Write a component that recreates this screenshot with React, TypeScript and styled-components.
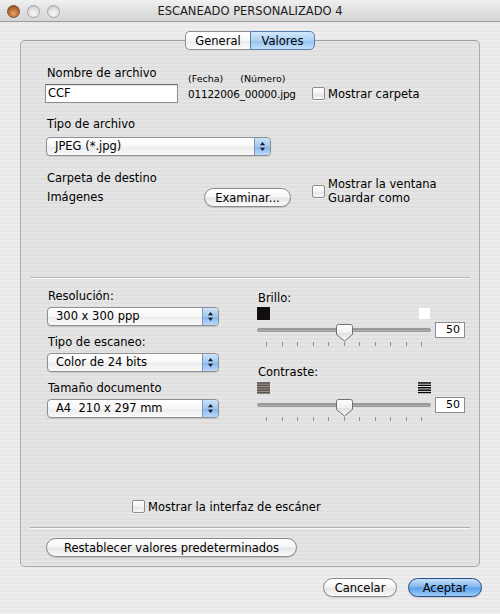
import React from 'react';
import styled, { createGlobalStyle, css } from 'styled-components';

const Global = createGlobalStyle`
  html, body { margin: 0; padding: 0; }
  body {
    font-family: "DejaVu Sans", "Noto Sans", sans-serif;
    font-size: 11.5px;
    color: #000;
  }
  * { box-sizing: border-box; }
`;

const Window = styled.div`
  width: 500px;
  height: 614px;
  display: flex;
  flex-direction: column;
  overflow: hidden;
  background: repeating-linear-gradient(
    to bottom,
    #eeeeee 0px, #eeeeee 2px,
    #e8e8e8 2px, #e8e8e8 4px
  );
`;

const TitleBar = styled.div`
  height: 22px;
  flex: none;
  display: grid;
  grid-template-columns: 1fr auto 1fr;
  align-items: center;
  background: linear-gradient(#f0f0f0, #dedede 60%, #d6d6d6);
  border-bottom: 1px solid #9c9c9c;
`;

const Lights = styled.div`
  display: flex;
  gap: 7px;
  padding-left: 7px;
  padding-top: 1px;
`;

const Light = styled.span<{ $close?: boolean }>`
  width: 13px;
  height: 13px;
  border-radius: 50%;
  ${(p) =>
    p.$close
      ? css`
          background: radial-gradient(circle at 50% 70%, #e7a064 0%, #b86a34 55%, #7d4018 100%);
          border: 1px solid #7a4a28;
        `
      : css`
          background: radial-gradient(circle at 50% 70%, #f8f8f8 0%, #e0e0e0 55%, #bdbdbd 100%);
          border: 1px solid #a6a6a6;
        `}
`;

const Title = styled.div`
  font-size: 11.5px;
  color: #1c1c1c;
  padding-top: 1px;
`;

const Body = styled.div`
  display: flex;
  flex-direction: column;
  padding: 9px 20px 0 20px;
`;

const TabStrip = styled.div`
  display: flex;
  justify-content: center;
  height: 19px;
  margin-bottom: -10px;
  position: relative;
  z-index: 1;
`;

const Tab = styled.div<{ $active?: boolean; $first?: boolean; $last?: boolean }>`
  width: 65px;
  height: 19px;
  display: flex;
  align-items: center;
  justify-content: center;
  font-size: 11.5px;
  border: 1px solid #8d8d8d;
  background: linear-gradient(#ffffff, #f7f7f7 50%, #ececec 51%, #fbfbfb);
  ${(p) => p.$first && css`border-radius: 5px 0 0 5px; border-right: none;`}
  ${(p) => p.$last && css`border-radius: 0 5px 5px 0;`}
  ${(p) =>
    p.$active &&
    css`
      border-color: #5a7fae;
      background: linear-gradient(#d4e8fb, #aad0f4 50%, #92c1ef 51%, #c4e0fa);
    `}
`;

const TabBox = styled.div`
  border: 1px solid #a9a9a9;
  border-top-color: #9e9e9e;
  border-radius: 5px;
  background: rgba(0, 0, 0, 0.035);
  padding: 24px 0 9px 0;
  display: flex;
  flex-direction: column;
`;

const Section = styled.div<{ $top?: number; $left?: number }>`
  padding-left: ${(p) => p.$left ?? 24}px;
  margin-top: ${(p) => p.$top ?? 0}px;
`;

const NameGrid = styled.div`
  display: grid;
  grid-template-columns: 143px 124px 1fr;
  grid-template-rows: 19px 19px;
  align-items: center;
`;

const Label = styled.div`
  line-height: 16px;
  height: 16px;
  padding-left: 2px;
  white-space: pre;
`;

const TopLabel = styled(Label)`
  align-self: start;
`;

const SmallRow = styled.div`
  display: flex;
  gap: 17px;
  font-size: 9.5px;
  align-self: end;
  padding-top: 3px;
`;

const TextInput = styled.div`
  width: 133px;
  height: 19px;
  background: #fff;
  border: 1px solid #8e8e8e;
  border-top-color: #6e6e6e;
  box-shadow: inset 0 1px 1px rgba(0, 0, 0, 0.12);
  padding-left: 2px;
  line-height: 17px;
`;

const FileName = styled.div`
  white-space: nowrap;
  font-size: 10.4px;
  letter-spacing: -0.15px;
`;

const CheckRow = styled.div<{ $align?: string }>`
  display: flex;
  align-items: ${(p) => p.$align ?? 'center'};
  gap: 3px;
  white-space: nowrap;
`;

const Check = styled.span`
  width: 13px;
  height: 13px;
  flex: none;
  border: 1px solid #8b8b8b;
  border-radius: 2px;
  background: linear-gradient(#ffffff, #f2f2f2 50%, #e4e4e4 51%, #f6f6f6);
  box-shadow: 0 1px 0 rgba(255, 255, 255, 0.6);
`;

const Field = styled.div<{ $gap?: number }>`
  display: flex;
  flex-direction: column;
  gap: ${(p) => p.$gap ?? 3}px;
`;

const PopupBox = styled.div<{ $width: number }>`
  width: ${(p) => p.$width}px;
  height: 19px;
  margin-left: 1px;
  display: flex;
  border: 1px solid #8f8f8f;
  border-radius: 4px;
  background: linear-gradient(#ffffff, #f6f6f6 50%, #ebebeb 51%, #fafafa);
  overflow: hidden;
  box-shadow: 0 1px 1px rgba(0, 0, 0, 0.12);
`;

const PopupText = styled.div`
  flex: 1;
  padding-left: 8px;
  line-height: 17px;
  white-space: pre;
`;

const PopupArrows = styled.div`
  width: 16px;
  flex: none;
  display: flex;
  align-items: center;
  justify-content: center;
  border-left: 1px solid #7d97ba;
  border-radius: 0 3px 3px 0;
  background: linear-gradient(#cde3f9, #9fc7f0 50%, #82b6ec 51%, #b9d9f8);
`;

const Popup = ({ text, width }: { text: string; width: number }) => (
  <PopupBox $width={width}>
    <PopupText>{text}</PopupText>
    <PopupArrows>
      <svg width="7" height="11" viewBox="0 0 7 11">
        <path d="M3.5 1 L6 4.2 H1 Z" fill="#1a1a1a" />
        <path d="M3.5 10 L6 6.8 H1 Z" fill="#1a1a1a" />
      </svg>
    </PopupArrows>
  </PopupBox>
);

const FolderRow = styled.div`
  display: flex;
  align-items: flex-start;
`;

const FolderCol = styled.div`
  width: 159px;
  flex: none;
  line-height: 19px;
  padding-left: 2px;
`;

const AquaButton = styled.div<{ $width: number; $default?: boolean }>`
  width: ${(p) => p.$width}px;
  height: 19px;
  flex: none;
  display: flex;
  align-items: center;
  justify-content: center;
  border-radius: 10px;
  border: 1px solid #8a8a8a;
  background: linear-gradient(#ffffff, #f6f6f6 45%, #e6e6e6 55%, #fbfbfb);
  box-shadow: 0 1px 1px rgba(0, 0, 0, 0.15);
  white-space: nowrap;
  ${(p) =>
    p.$default &&
    css`
      border-color: #264f88;
      background: linear-gradient(#c6e0fb, #7fb6ee 48%, #5a9fe8 52%, #9ccdf9);
    `}
`;

const BrowseButton = styled(AquaButton)`
  margin-top: 19px;
`;

const SaveCheck = styled(CheckRow)`
  margin-left: 21px;
  margin-top: 8px;
  line-height: 14px;
  gap: 3px;
  align-items: center;
`;

const Separator = styled.div<{ $top: number }>`
  height: 2px;
  margin: ${(p) => p.$top}px 9px 0 9px;
  border-top: 1px solid #b2b2b2;
  border-bottom: 1px solid #fafafa;
`;

const ScanGrid = styled.div`
  display: grid;
  grid-template-columns: 172px 208px;
  column-gap: 39px;
  margin-top: 9px;
  padding-left: 25px;
`;

const Column = styled.div<{ $gap?: number }>`
  display: flex;
  flex-direction: column;
  gap: ${(p) => p.$gap ?? 0}px;
`;

const SliderLabel = styled(Label)<{ $top: number }>`
  margin-top: ${(p) => p.$top}px;
  padding-left: 1px;
`;

const IconRow = styled.div`
  display: flex;
  justify-content: space-between;
  width: 174px;
  height: 13px;
  margin-top: 1px;
`;

const Swatch = styled.span<{ $color: string }>`
  width: 13px;
  height: 13px;
  background: ${(p) => p.$color};
  border: 1px solid ${(p) => (p.$color === '#ffffff' ? '#e2e2e2' : '#111')};
`;

const SliderRow = styled.div`
  display: flex;
  align-items: center;
  height: 18px;
  gap: 4px;
  margin-top: 1px;
`;

const TrackWrap = styled.div`
  position: relative;
  width: 174px;
  height: 18px;
  display: flex;
  align-items: center;
`;

const Track = styled.div`
  width: 100%;
  height: 4px;
  border-radius: 2px;
  background: linear-gradient(#8e8e8e, #b9b9b9);
  border: 1px solid #9a9a9a;
`;

const Thumb = styled.svg`
  position: absolute;
  left: 79px;
  top: 3px;
`;

const ValueBox = styled.div`
  width: 30px;
  height: 16px;
  background: #fff;
  border: 1px solid #8c8c8c;
  text-align: right;
  padding-right: 4px;
  font-size: 11px;
  line-height: 14px;
`;

const Ticks = styled.div`
  display: flex;
  justify-content: space-between;
  width: 174px;
  padding: 0 9px;
  margin-top: 3px;
`;

const Tick = styled.span`
  width: 1px;
  height: 4px;
  background: #8f8f8f;
`;

const Slider = () => (
  <>
    <SliderRow>
      <TrackWrap>
        <Track />
        <Thumb width="17" height="18" viewBox="0 0 17 18">
          <defs>
            <linearGradient id="tg" x1="0" y1="0" x2="0" y2="1">
              <stop offset="0" stopColor="#ffffff" />
              <stop offset="0.5" stopColor="#f0f0f0" />
              <stop offset="0.52" stopColor="#e0e0e0" />
              <stop offset="1" stopColor="#fafafa" />
            </linearGradient>
          </defs>
          <path
            d="M2.5 0.5 H14.5 Q16.5 0.5 16.5 2.5 V10.5 L8.5 17 L0.5 10.5 V2.5 Q0.5 0.5 2.5 0.5 Z"
            fill="url(#tg)"
            stroke="#6f6f6f"
          />
        </Thumb>
      </TrackWrap>
      <ValueBox>50</ValueBox>
    </SliderRow>
    <Ticks>
      {Array.from({ length: 11 }).map((_, i) => (
        <Tick key={i} />
      ))}
    </Ticks>
  </>
);

const ContrastIcon = ({ line, gap }: { line: string; gap: string }) => (
  <svg width="13" height="12" viewBox="0 0 13 12">
    <rect x="0" y="0" width="13" height="12" fill={gap} />
    {[0.2, 2.6, 5, 7.4, 9.8].map((y) => (
      <rect key={y} x="0" y={y} width="13" height="1.5" fill={line} />
    ))}
  </svg>
);

const ContrastRow = styled(IconRow)`
  height: 12px;
  margin-top: 2px;
  margin-bottom: 1px;
`;

const InterfaceRow = styled(CheckRow)`
  margin-top: 78px;
  padding-left: 111px;
  height: 15px;
`;

const ResetRow = styled.div`
  margin-top: 9px;
  padding-left: 25px;
`;

const Footer = styled.div`
  display: flex;
  justify-content: flex-end;
  gap: 11px;
  margin-right: -2px;
  margin-top: 11px;
`;

export default function App() {
  return (
    <>
      <Global />
      <Window>
        <TitleBar>
          <Lights>
            <Light $close />
            <Light />
            <Light />
          </Lights>
          <Title>ESCANEADO PERSONALIZADO 4</Title>
          <div />
        </TitleBar>
        <Body>
          <TabStrip>
            <Tab $first>General</Tab>
            <Tab $last $active>
              Valores
            </Tab>
          </TabStrip>
          <TabBox>
            <Section>
              <NameGrid>
                <TopLabel>Nombre de archivo</TopLabel>
                <SmallRow>
                  <span>(Fecha)</span>
                  <span>(Número)</span>
                </SmallRow>
                <div />
                <TextInput>CCF</TextInput>
                <FileName>01122006_00000.jpg</FileName>
                <CheckRow>
                  <Check />
                  <span>Mostrar carpeta</span>
                </CheckRow>
              </NameGrid>
            </Section>

            <Section $top={13}>
              <Field $gap={5}>
                <Label>Tipo de archivo</Label>
                <Popup text="JPEG (*.jpg)" width={225} />
              </Field>
            </Section>

            <Section $top={13}>
              <FolderRow>
                <FolderCol>
                  <div>Carpeta de destino</div>
                  <div>Imágenes</div>
                </FolderCol>
                <BrowseButton $width={87}>Examinar...</BrowseButton>
                <SaveCheck>
                  <Check />
                  <div>
                    <div>Mostrar la ventana</div>
                    <div>Guardar como</div>
                  </div>
                </SaveCheck>
              </FolderRow>
            </Section>

            <Separator $top={70} />

            <ScanGrid>
              <Column $gap={8}>
                <Field>
                  <Label>Resolución:</Label>
                  <Popup text="300 x 300 ppp" width={172} />
                </Field>
                <Field>
                  <Label>Tipo de escaneo:</Label>
                  <Popup text="Color de 24 bits" width={172} />
                </Field>
                <Field>
                  <Label>Tamaño documento</Label>
                  <Popup text="A4  210 x 297 mm" width={172} />
                </Field>
              </Column>
              <Column>
                <SliderLabel $top={2}>Brillo:</SliderLabel>
                <IconRow>
                  <Swatch $color="#120c10" />
                  <Swatch $color="#ffffff" />
                </IconRow>
                <Slider />
                <SliderLabel $top={18}>Contraste:</SliderLabel>
                <ContrastRow>
                  <ContrastIcon line="#5b514b" gap="#a59e99" />
                  <ContrastIcon line="#000000" gap="#ffffff" />
                </ContrastRow>
                <Slider />
              </Column>
            </ScanGrid>

            <InterfaceRow>
              <Check />
              <span>Mostrar la interfaz de escáner</span>
            </InterfaceRow>

            <Separator $top={13} />

            <ResetRow>
              <AquaButton $width={251}>Restablecer valores predeterminados</AquaButton>
            </ResetRow>
          </TabBox>
          <Footer>
            <AquaButton $width={74}>Cancelar</AquaButton>
            <AquaButton $width={74} $default>
              Aceptar
            </AquaButton>
          </Footer>
        </Body>
      </Window>
    </>
  );
}
